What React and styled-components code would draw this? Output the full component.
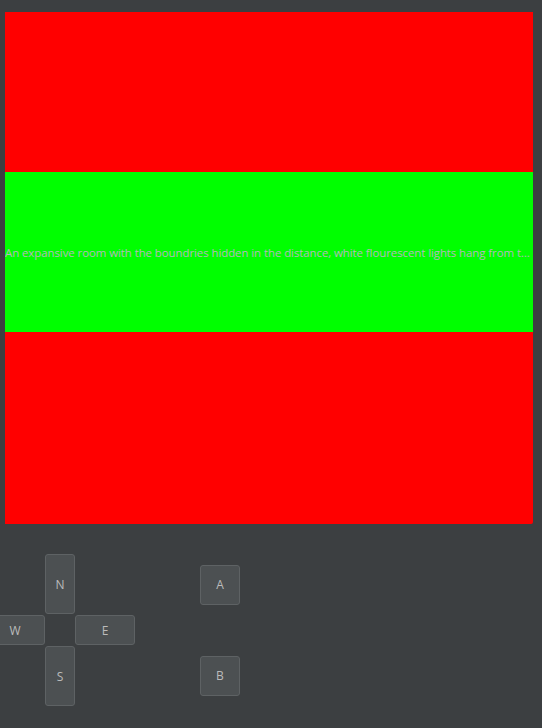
import React from "react";
import styled, { createGlobalStyle } from "styled-components";

const Global = createGlobalStyle`
  html, body {
    margin: 0;
    padding: 0;
    background: #3c3f41;
    overflow: hidden;
  }
  body {
    font-family: "Open Sans", "Noto Sans", sans-serif;
    color: #bbbbbb;
  }
`;

const Page = styled.div`
  width: 542px;
  height: 728px;
  background: #3c3f41;
  padding-top: 12px;
  box-sizing: border-box;
  overflow: hidden;
`;

const Scene = styled.div`
  margin-left: 5px;
  width: 528px;
  height: 512px;
  background: #ff0000;
  padding-top: 160px;
  box-sizing: border-box;
  border-bottom-right-radius: 2px;
`;

const Band = styled.div`
  height: 160px;
  background: #00ff00;
  display: flex;
  align-items: center;
`;

const Caption = styled.span`
  display: block;
  width: 100%;
  font-family: "Open Sans", "Noto Sans", sans-serif;
  font-size: 11.5px;
  letter-spacing: -0.1px;
  color: #b4b8bc;
  white-space: nowrap;
  overflow: hidden;
  text-overflow: ellipsis;
`;

const Controls = styled.div`
  display: flex;
  align-items: center;
  margin-top: 30px;
`;

const DPad = styled.div`
  display: grid;
  grid-template-columns: 60px 30px 60px;
  grid-template-rows: 60px 30px 60px;
  row-gap: 1px;
  margin-left: -15px;
`;

const Key = styled.button`
  grid-column: ${(p) => p.$col};
  grid-row: ${(p) => p.$row};
  width: ${(p) => p.$w || "100%"};
  height: ${(p) => p.$h || "100%"};
  box-sizing: border-box;
  margin: 0;
  padding: 0;
  background: #4c5052;
  border: 1px solid #5e6264;
  border-radius: 3px;
  color: #bbbbbb;
  font-family: "Open Sans", "Noto Sans", sans-serif;
  font-size: 12px;
  display: flex;
  align-items: center;
  justify-content: center;
`;

const Actions = styled.div`
  display: flex;
  flex-direction: column;
  gap: 51px;
  margin-left: 65px;
`;

export default function App() {
  return (
    <Page>
      <Global />
      <Scene>
        <Band>
          <Caption>
            An expansive room with the boundries hidden in the distance, white flourescent lights hang from the ceiling above
          </Caption>
        </Band>
      </Scene>
      <Controls>
        <DPad>
          <Key $col="2" $row="1">N</Key>
          <Key $col="1" $row="2">W</Key>
          <Key $col="3" $row="2">E</Key>
          <Key $col="2" $row="3">S</Key>
        </DPad>
        <Actions>
          <Key $w="40px" $h="40px">A</Key>
          <Key $w="40px" $h="40px">B</Key>
        </Actions>
      </Controls>
    </Page>
  );
}
